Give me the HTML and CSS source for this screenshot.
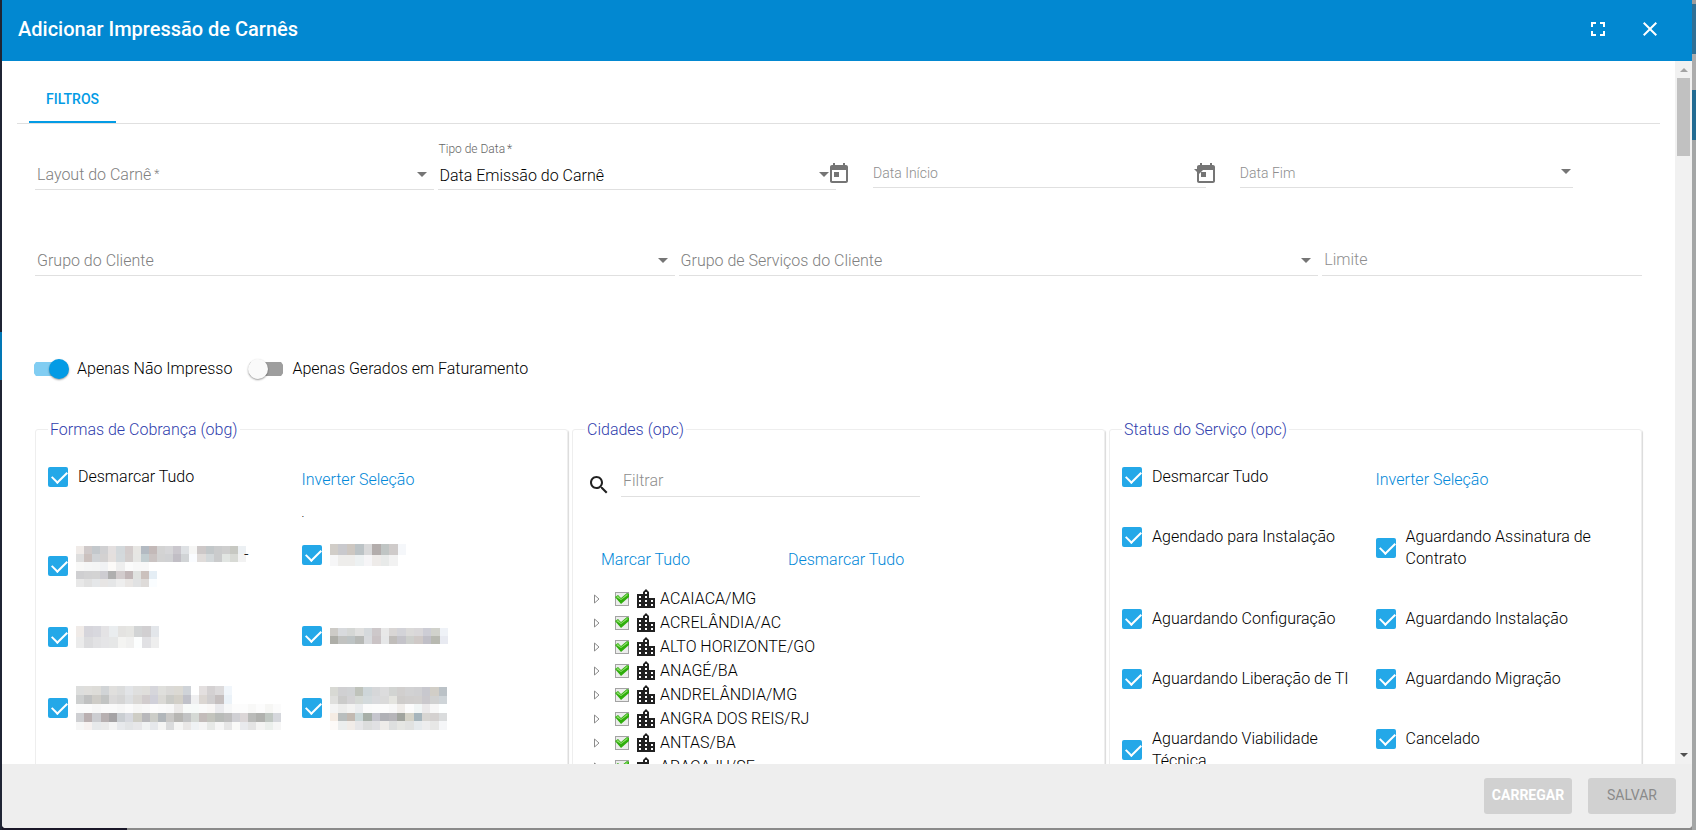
FILE: index.html
```html
<!DOCTYPE html>
<html lang="pt-BR">
<head>
    <meta charset="UTF-8">
    <meta name="viewport" content="width=device-width, initial-scale=1.0">
    <title>Adicionar Impressão de Carnês</title>
    <link rel="stylesheet" href="styles.css">
</head>
<body>
    <svg width="0" height="0" class="sprite">
        <symbol id="calendar" viewBox="0 0 24 24"><path d="M19 3h-1V1h-2v2H8V1H6v2H5c-1.110 0-1.990.9-1.990 2L3 19c0 1.100.890 2 2 2h14c1.100 0 2-.9 2-2V5c0-1.100-.9-2-2-2zm0 16H5V8h14v11zM7 10h5v5H7z"/></symbol>
        <symbol id="city" viewBox="0 0 24 24"><path d="M15 11V5l-3-3-3 3v2H3v14h18V11h-6zm-8 8H5v-2h2v2zm0-4H5v-2h2v2zm0-4H5V9h2v2zm6 8h-2v-2h2v2zm0-4h-2v-2h2v2zm0-4h-2V9h2v2zm0-4h-2V5h2v2zm6 12h-2v-2h2v2zm0-4h-2v-2h2v2z"/></symbol>
        <symbol id="checked" viewBox="0 0 16 16">
            <rect x="1.500" y="1.500" width="13" height="13" fill="#ececec" stroke="#a3a3a3"/>
            <path d="M1 6l3-2 3 3 6-5 2 1v3l-8 7z" fill="#2fae0c"/>
            <path d="M2 6l2-1 3 3 6-5 1 1-7 5z" fill="#8ede6c"/>
        </symbol>
        <symbol id="expand" viewBox="0 0 8 12"><path d="M1.500 2v8l4.500-4z" fill="#fff" stroke="#8b8b8b"/></symbol>
    </svg>

    <div class="dialog">
        <header class="toolbar">
            <h2>Adicionar Impressão de Carnês</h2>
            <button class="icon-button" aria-label="Tela cheia">
                <svg viewBox="0 0 24 24"><path d="M7 14H5v5h5v-2H7v-3zm-2-4h2V7h3V5H5v5zm12 7h-3v2h5v-5h-2v3zM14 5v2h3v3h2V5h-5z"/></svg>
            </button>
            <button class="icon-button" aria-label="Fechar">
                <svg viewBox="0 0 24 24"><path d="M19 6.410L17.590 5 12 10.590 6.410 5 5 6.410 10.590 12 5 17.590 6.410 19 12 13.410 17.590 19 19 17.590 13.410 12z"/></svg>
            </button>
        </header>

        <div class="body">
            <main class="content">
                <nav class="tabs">
                    <button class="tab">FILTROS</button>
                </nav>

                <form class="filters">
                    <div class="row first-row">
                        <div class="field select">
                            <label for="layout">Layout do Carnê <small>*</small></label>
                            <select id="layout"><option></option></select>
                        </div>
                        <div class="field select floating">
                            <label for="tipo">Tipo de Data <small>*</small></label>
                            <select id="tipo"><option>Data Emissão do Carnê</option></select>
                        </div>
                        <div class="dates">
                            <div class="datepicker">
                                <button type="button" aria-label="Abrir calendário"><svg><use href="#calendar"/></svg></button>
                                <div class="field select date"><input type="text" placeholder="Data Início" aria-label="Data Início"></div>
                            </div>
                            <div class="datepicker">
                                <button type="button" aria-label="Abrir calendário"><svg><use href="#calendar"/></svg></button>
                                <div class="field select date"><input type="text" placeholder="Data Fim" aria-label="Data Fim"></div>
                            </div>
                        </div>
                    </div>

                    <div class="row second-row">
                        <div class="field select">
                            <label for="grupo">Grupo do Cliente</label>
                            <select id="grupo"><option></option></select>
                        </div>
                        <div class="field select">
                            <label for="servicos">Grupo de Serviços do Cliente</label>
                            <select id="servicos"><option></option></select>
                        </div>
                        <div class="field"><input type="text" placeholder="Limite" aria-label="Limite"></div>
                    </div>

                    <div class="switches">
                        <label><input type="checkbox" class="switch" checked>Apenas Não Impresso</label>
                        <label><input type="checkbox" class="switch">Apenas Gerados em Faturamento</label>
                    </div>

                    <div class="boxes">
                        <fieldset>
                            <legend>Formas de Cobrança (obg)</legend>
                            <div class="options">
                                <label><input type="checkbox" checked>Desmarcar Tudo</label>
                                <div class="invert"><a href="#">Inverter Seleção</a><p>.</p></div>
                                <label class="two-lines"><input type="checkbox" checked><span class="mosaic" data-mosaic="0"></span><span class="dash">-</span></label>
                                <label><input type="checkbox" checked><span class="mosaic" data-mosaic="1"></span></label>
                                <label><input type="checkbox" checked><span class="mosaic" data-mosaic="2"></span></label>
                                <label><input type="checkbox" checked><span class="mosaic" data-mosaic="3"></span></label>
                                <label class="two-lines"><input type="checkbox" checked><span class="mosaic" data-mosaic="4"></span></label>
                                <label class="two-lines"><input type="checkbox" checked><span class="mosaic" data-mosaic="5"></span></label>
                            </div>
                        </fieldset>

                        <fieldset>
                            <legend>Cidades (opc)</legend>
                            <div class="search">
                                <svg viewBox="0 0 24 24"><path d="M15.500 14h-.790l-.280-.270C15.410 12.590 16 11.110 16 9.500 16 5.910 13.090 3 9.500 3S3 5.910 3 9.500 5.910 16 9.500 16c1.610 0 3.090-.590 4.230-1.570l.270.280v.790l5 4.990L20.490 19l-4.990-5zm-6 0C7.010 14 5 11.990 5 9.500S7.010 5 9.500 5 14 7.010 14 9.500 11.990 14 9.500 14z"/></svg>
                                <div class="field"><input type="text" placeholder="Filtrar" aria-label="Filtrar"></div>
                            </div>
                            <div class="tree-links">
                                <a href="#">Marcar Tudo</a>
                                <a href="#">Desmarcar Tudo</a>
                            </div>
                            <ul class="tree">
                                <li><svg class="expand"><use href="#expand"/></svg><svg class="check"><use href="#checked"/></svg><svg class="city"><use href="#city"/></svg>ACAIACA/MG</li>
                                <li><svg class="expand"><use href="#expand"/></svg><svg class="check"><use href="#checked"/></svg><svg class="city"><use href="#city"/></svg>ACRELÂNDIA/AC</li>
                                <li><svg class="expand"><use href="#expand"/></svg><svg class="check"><use href="#checked"/></svg><svg class="city"><use href="#city"/></svg>ALTO HORIZONTE/GO</li>
                                <li><svg class="expand"><use href="#expand"/></svg><svg class="check"><use href="#checked"/></svg><svg class="city"><use href="#city"/></svg>ANAGÉ/BA</li>
                                <li><svg class="expand"><use href="#expand"/></svg><svg class="check"><use href="#checked"/></svg><svg class="city"><use href="#city"/></svg>ANDRELÂNDIA/MG</li>
                                <li><svg class="expand"><use href="#expand"/></svg><svg class="check"><use href="#checked"/></svg><svg class="city"><use href="#city"/></svg>ANGRA DOS REIS/RJ</li>
                                <li><svg class="expand"><use href="#expand"/></svg><svg class="check"><use href="#checked"/></svg><svg class="city"><use href="#city"/></svg>ANTAS/BA</li>
                                <li><svg class="expand"><use href="#expand"/></svg><svg class="check"><use href="#checked"/></svg><svg class="city"><use href="#city"/></svg>ARACAJU/SE</li>
                            </ul>
                        </fieldset>

                        <fieldset>
                            <legend>Status do Serviço (opc)</legend>
                            <div class="options">
                                <label><input type="checkbox" checked>Desmarcar Tudo</label>
                                <div class="invert"><a href="#">Inverter Seleção</a></div>
                                <label><input type="checkbox" checked>Agendado para Instalação</label>
                                <label><input type="checkbox" checked>Aguardando Assinatura de Contrato</label>
                                <label><input type="checkbox" checked>Aguardando Configuração</label>
                                <label><input type="checkbox" checked>Aguardando Instalação</label>
                                <label><input type="checkbox" checked>Aguardando Liberação de TI</label>
                                <label><input type="checkbox" checked>Aguardando Migração</label>
                                <label><input type="checkbox" checked>Aguardando Viabilidade Técnica</label>
                                <label><input type="checkbox" checked>Cancelado</label>
                            </div>
                        </fieldset>
                    </div>
                </form>
            </main>
            <div class="scrollbar">
                <span class="arrow-up"></span>
                <span class="thumb"></span>
                <span class="arrow-down"></span>
            </div>
        </div>

        <footer class="actions">
            <button class="load" disabled>CARREGAR</button>
            <button disabled>SALVAR</button>
        </footer>
    </div>

    <script src="mosaic.js"></script>
</body>
</html>
```
FILE: styles.css
```css
* {
    box-sizing: border-box;
}
body {
    margin: 0;
    height: 100vh;
    overflow: hidden;
    font-family: Roboto, sans-serif;
    font-size: 16px;
    font-weight: 300;
    line-height: 22px;
    color: #000;
    background:
        linear-gradient(#1f2434 332px, #0277b5 332px, #0277b5 380px, #1f2434 380px) left / 2px 100% no-repeat,
        linear-gradient(#9c9c9c 4px, #2e7096 4px, #2e7096 54px, #acacac 54px, #acacac 90px, #226b92 90px, #226b92 140px, #a4a6a6 140px) right / 4px 100% no-repeat,
        linear-gradient(90deg, #1a1728 127px, #8a8a8a 127px);
}
button, input, select {
    font: inherit;
    border: none;
    background: none;
    padding: 0;
    margin: 0;
    outline: none;
}
a {
    color: #0288d8;
    text-decoration: none;
}
.sprite {
    position: absolute;
}
.dialog {
    display: flex;
    flex-direction: column;
    height: calc(100vh - 2px);
    margin: 0 4px 0 2px;
    background: #fff;
    border-radius: 0 0 4px 4px;
    overflow: hidden;
}
.toolbar {
    display: flex;
    align-items: center;
    gap: 28px;
    flex: none;
    height: 61px;
    padding: 0 30px 3px 16px;
    background: #0288d1;
    color: #fff;
}
.toolbar h2 {
    flex: 1;
    margin: 0;
    font-size: 20px;
    font-weight: 500;
}
.icon-button {
    height: 24px;
}
.icon-button svg {
    width: 24px;
    height: 24px;
    fill: #fff;
}
.body {
    display: flex;
    flex: 1;
    min-height: 0;
}
.content {
    flex: 1;
    min-width: 0;
    overflow: hidden;
}

/* tabs */
.tabs {
    display: flex;
    margin: 15px 15px 0;
    padding-left: 12px;
    border-bottom: 1px solid #e0e0e0;
}
.tab {
    height: 47px;
    padding: 0 17px;
    border-bottom: 2px solid #039be5;
    color: #039be5;
    font-size: 14px;
    font-weight: 500;
}

/* fields */
.filters {
    padding: 36px 33px 0;
}
.row {
    display: grid;
    gap: 4px;
}
.first-row {
    grid-template-columns: 24.8% 24.8% 1fr;
}
.second-row {
    grid-template-columns: 2fr 2fr 1fr;
    margin-top: 56px;
}
.field {
    display: grid;
    height: 30px;
    border-bottom: 1px solid #e0e0e0;
    align-items: center;
}
.field > *, .select::after {
    grid-area: 1 / 1;
}
.field input, .field select {
    width: 100%;
    height: 29px;
    padding: 0 2px;
    appearance: none;
    color: #000;
}
.field input {
    padding-bottom: 2px;
}
.field select {
    padding-top: 2px;
}
.field label {
    padding-left: 2px;
    color: #808080;
    pointer-events: none;
}
.field small {
    font-size: 12px;
    line-height: 1;
    vertical-align: 2px;
    margin-left: -1px;
}
.field input::placeholder {
    color: #8e8e8e;
    opacity: 1;
}
.select::after {
    content: "";
    justify-self: end;
    margin-right: 7px;
    border: 5px solid transparent;
    border-top-color: #757575;
    border-bottom: none;
    pointer-events: none;
}
.floating label {
    align-self: start;
    margin-top: -22px;
    padding-left: 1px;
    font-size: 12px;
    color: #666;
}
.floating small {
    vertical-align: 0;
}
.dates {
    display: flex;
    margin-left: -21px;
}
.datepicker {
    display: flex;
    flex: 0 0 47%;
}
.datepicker + .datepicker {
    margin-left: -20px;
}
.datepicker button {
    flex: none;
    width: 40px;
    height: 28px;
    margin-right: 14px;
}
.datepicker svg {
    display: block;
    width: 24px;
    height: 24px;
    margin: auto;
    fill: #757575;
}
.date {
    flex: 1;
    height: 28px;
}
.date input {
    height: 27px;
    padding: 0 0 2px;
    font-size: 14px;
}
.date::after {
    margin: 0 2px 4px;
}

/* switches */
.switches {
    display: flex;
    gap: 18px;
    margin-top: 81px;
}
.switches label {
    display: flex;
    align-items: center;
    gap: 8px;
    height: 24px;
}
.switch {
    display: flex;
    align-items: center;
    appearance: none;
    width: 36px;
    height: 20px;
    background: linear-gradient(#9e9e9e, #9e9e9e) center / 34px 14px no-repeat;
    border-radius: 10px;
}
.switches .switch {
    margin-left: -2px;
}
.switch::before {
    content: "";
    width: 20px;
    height: 20px;
    border-radius: 50%;
    background: #fafafa;
    box-shadow: 0 1px 2px rgba(0, 0, 0, 0.4);
}
.switch:checked {
    justify-content: flex-end;
    background-image: linear-gradient(#81cdf2, #81cdf2);
}
.switch:checked::before {
    background: #039be5;
}

/* boxes */
.boxes {
    display: grid;
    grid-template-columns: repeat(3, 1fr);
    gap: 4px;
    margin-top: 37px;
}
fieldset {
    min-width: 0;
    height: 600px;
    margin: 0;
    padding: 6px 12px 0;
    border: 1px solid #eee;
    border-radius: 3px;
    box-shadow: 1px 1px 1px rgba(0, 0, 0, 0.15);
}
legend {
    padding: 1px 2px 0;
    color: #3040ad;
}
.options {
    display: grid;
    grid-template-columns: 1fr 1fr;
    align-items: start;
}
.options label {
    display: flex;
    align-items: center;
    gap: 10px;
    padding: 19px 8px 19px 0;
}
.options input {
    display: grid;
    flex: none;
    appearance: none;
    width: 20px;
    height: 20px;
    border-radius: 2px;
    background: #24a8e8;
}
.options input::before {
    content: "";
    width: 7px;
    height: 13px;
    margin: 1px 0 0 7px;
    border: solid #fff;
    border-width: 0 2px 2px 0;
    rotate: 45deg;
}
.options input:not(:checked) {
    background: #bbb;
}
.invert {
    padding-top: 22px;
}
.invert p {
    height: 34px;
    margin: 0;
    font-size: 12px;
    padding-top: 11px;
}
.two-lines {
    height: 82px;
}
.options .mosaic {
    margin-left: -2px;
}
.options .mosaic svg {
    display: block;
}
.dash {
    align-self: flex-start;
    margin-left: -12px;
}
.search {
    display: flex;
    align-items: flex-end;
    gap: 10px;
    width: 333px;
    margin: 20px 0 0 2px;
}
.search svg {
    width: 24px;
    height: 24px;
    fill: #212121;
}
.search .field {
    flex: 1;
}
.tree-links {
    display: grid;
    grid-template-columns: 187px 1fr;
    margin: 52px 0 16px 16px;
}
.tree {
    margin: 0;
    padding: 0 0 0 8px;
    list-style: none;
}
.tree li {
    display: flex;
    align-items: center;
    height: 24px;
}
.expand {
    width: 8px;
    height: 12px;
    margin-right: 13px;
}
.check {
    width: 16px;
    height: 16px;
    margin-right: 4px;
}
.city {
    width: 24px;
    height: 24px;
    margin-right: 2px;
    fill: #212121;
}

/* scrollbar */
.scrollbar {
    display: flex;
    flex-direction: column;
    align-items: center;
    width: 17px;
    padding: 7px 0;
    background: #f1f1f1;
}
.arrow-up {
    border: 4px solid transparent;
    border-top: none;
    border-bottom-color: #a3a3a3;
}
.arrow-down {
    margin-top: auto;
    border: 4px solid transparent;
    border-bottom: none;
    border-top-color: #505050;
}
.thumb {
    width: 13px;
    height: 78px;
    margin-top: 6px;
    background: #c1c1c1;
}

/* footer */
.actions {
    display: flex;
    justify-content: flex-end;
    gap: 16px;
    flex: none;
    height: 64px;
    padding: 14px 16px;
    background: #eee;
}
.actions button {
    width: 88px;
    height: 36px;
    padding-bottom: 2px;
    border-radius: 3px;
    background: #d1d1d1;
    color: #8a8a8a;
    font-size: 14px;
    font-weight: 400;
}
.actions .load {
    color: #fff;
    font-weight: 700;
}
```
FILE: mosaic.js
```js
// each mosaic: width, row heights, rows of colours ("-" = empty cell)
const mosaics = [
    { width: 170, heights: [8, 8, 9, 8, 8], rows: [
        "f0ebe8 cfc9c9 c3c8cc d0d0d2 e3dfdf d3d8db d3cccc e7e6e3 b3bac2 c3b9b8 d3d3d3 d6d6d8 cac7cd dee1e4 f6f6f5 cdc8c8 c2c7c9 cacbcc cecece c7c8c2 ecf0f3",
        "dedede cbc1be d0d3d6 d3d1d1 e4dfdd d4d9dc d3cecd e6e6e4 c2cdd0 cac3c2 d2d2d2 d0d1d3 c1bec5 d1d4d6 fafcff e0dcda d3d8da cacbcc e1e5e2 d8dad5 f2f2f2",
        "f8f8f7 f5f6f6 f4f5f5 f1f2f4 fcfaf8 eeeeee fbfbfb f8f8f8 f8f8f8 - - - - - - - - - - - -",
        "cfcfd1 d2d2d3 d3d3d3 cdccd1 afafaf d2cccd c1b6b7 e0e2e0 cbc1bd e5eef5 - - - - - - - - - - -",
        "e8e8e8 e1e1e1 e5e7e9 e7e5e4 e5e6e7 eeeeee e9e6e4 e1e2e3 dedbd9 fafdff - - - - - - - - - - -"
    ] },
    { width: 76, heights: [11, 11], rows: [
        "d1cdc8 c9c9cd cdc7c1 bcc3c6 d9d9da b3adac c0c5c4 cfcbca f5f7fa",
        "f6f6f7 eeedeb eeedeb edf1f2 f6f5f7 eeebe9 e8eae9 f2f2f2 -"
    ] },
    { width: 83, heights: [11, 11], rows: [
        "f0ebe8 d6d5db d8d8de e4e3e5 eaedef e4e3e1 e6e6e3 d2d4d5 d1cfd1 e3e6ea",
        "ebebeb dcdcde e2e2e4 e5e5e7 e6e7e7 f4f4f2 f0f0ef fcfefe e1e1e4 eeeeee"
    ] },
    { width: 118, heights: [8, 8], rows: [
        "cdcbc7 d8dadd d5d7d5 e0e0df d5d9dc cdc8ca e8e8e8 d9d6d5 d3d3d8 dbdad9 d9d7d9 cdcdd5 d1d2cc eff2f7",
        "aeaea8 c1c2c0 bdc3c4 b7b9b6 d8dadd cac3c5 e6e7e8 c0bdba c4c3c9 cdcfcc cfc9c7 c0bfc7 b8b9b1 e8eaf1"
    ] },
    { width: 205, heights: [9, 9, 9, 9, 8], rows: [
        "dddedd dfdedb dddcd8 d1d4d6 e0dfdd dbdcdc e2e4e7 dfdfde dfdedb d6d6db dfdfdc dad9d7 dbd9d3 cfd3d8 - e3dfdf d4d1d2 dcdadb f1f6fb - - - - - -",
        "cdcfcf c0c1c1 ceccc7 c2c4c3 dad9d9 d5d5d5 dddfe1 dad8d5 d1cccd d0d0d9 dad9d5 cacbc7 d2cfc7 c0c1c9 f0f0f1 dbd6d2 d0cecf c5bfbf ebf2f8 - - - - - -",
        "fbfbfb fbfbfb f7f7f7 fafafa fafafa f7f7f7 fbfbfb f6f6f5 f8f8f8 fcfcfc fafafa f8f8f8 ebe9e8 f8faf9 f7faf9 fafafa f9f7f6 eaeaed f6f7f8 fcfcfc fcfcfc f8f8f7 fcfcfc f6f6f4 fbfbfb",
        "cecfd2 bab0b1 cccdd1 b7b0b1 a5a3a5 caced2 d7d9df cecdc5 b8b8bb cccdc8 b1b6ba c9c8c6 b7b6b3 c2c3c4 d5d9d5 c3bcba c3c4bd b8bbb8 bebebe d0d0d4 dbd6d7 babbb9 b0b1ae c0c7c2 d5d7dc",
        "f6f6f6 f6f1f0 e7e9eb eaeaea f4f4f4 e7e9ec e2e4e6 e7e7e9 f1f3f3 e6e8eb f5f5f4 dadbdc f5f5f4 e9e7e6 eff2f4 f5f5f5 e7e9e7 f6f6f6 e6e6e6 fafaf8 e9eaed e4e4e4 f4f4f3 ebefec f6f6f6"
    ] },
    { width: 117, heights: [9, 8, 9, 8, 9], rows: [
        "d8d9d4 d0d0d2 d0d2d4 bfc3bb ced6d9 d6d7d9 dcdcdd d2d4d2 d1cfce d2d2d3 d0d0d2 c8c8ce d1cec7 bbc2c7",
        "dfdfdd cbcbca d3d2d4 d5d9d5 d3dadc d9dadd dadada e4e4df ceccca d0cecd d1cfce cac8cc d0d1d1 ced4d8",
        "f4f4f4 ededec f3f3f2 ebedef fbfbfb fcfcfc fcfcfc f8f8f8 f1eeeb fcfcfc f2f6f6 ebe9ea f7f7f7 fdffff",
        "f5ece4 b9bebe c2b9b1 cad7d8 a7afa8 c5c5cd b0b1b6 b6b5b9 a1a49e d4d2c7 a6b5bc d7d5d2 d4d1d0 dadcdd",
        "fdfaf8 eceeee f1ece8 e6e6e8 dcdddd e0e0e3 eeece9 dddfdf e5e6e3 e1e2e1 e6eaed ededee e7e7e6 f5f6f8"
    ] }
];

document.querySelectorAll(".mosaic").forEach(el => {
    const { width, heights, rows } = mosaics[el.dataset.mosaic];
    const total = heights.reduce((a, b) => a + b);
    const cell = width / rows[0].split(" ").length;
    let y = 0;
    let rects = "";
    rows.forEach((row, r) => {
        row.split(" ").forEach((color, c) => {
            if (color !== "-") {
                rects += `<rect x="${c * cell}" y="${y}" width="${cell}" height="${heights[r]}" fill="#${color}"/>`;
            }
        });
        y += heights[r];
    });
    el.innerHTML = `<svg width="${width}" height="${total}" shape-rendering="crispEdges">${rects}</svg>`;
});
```
